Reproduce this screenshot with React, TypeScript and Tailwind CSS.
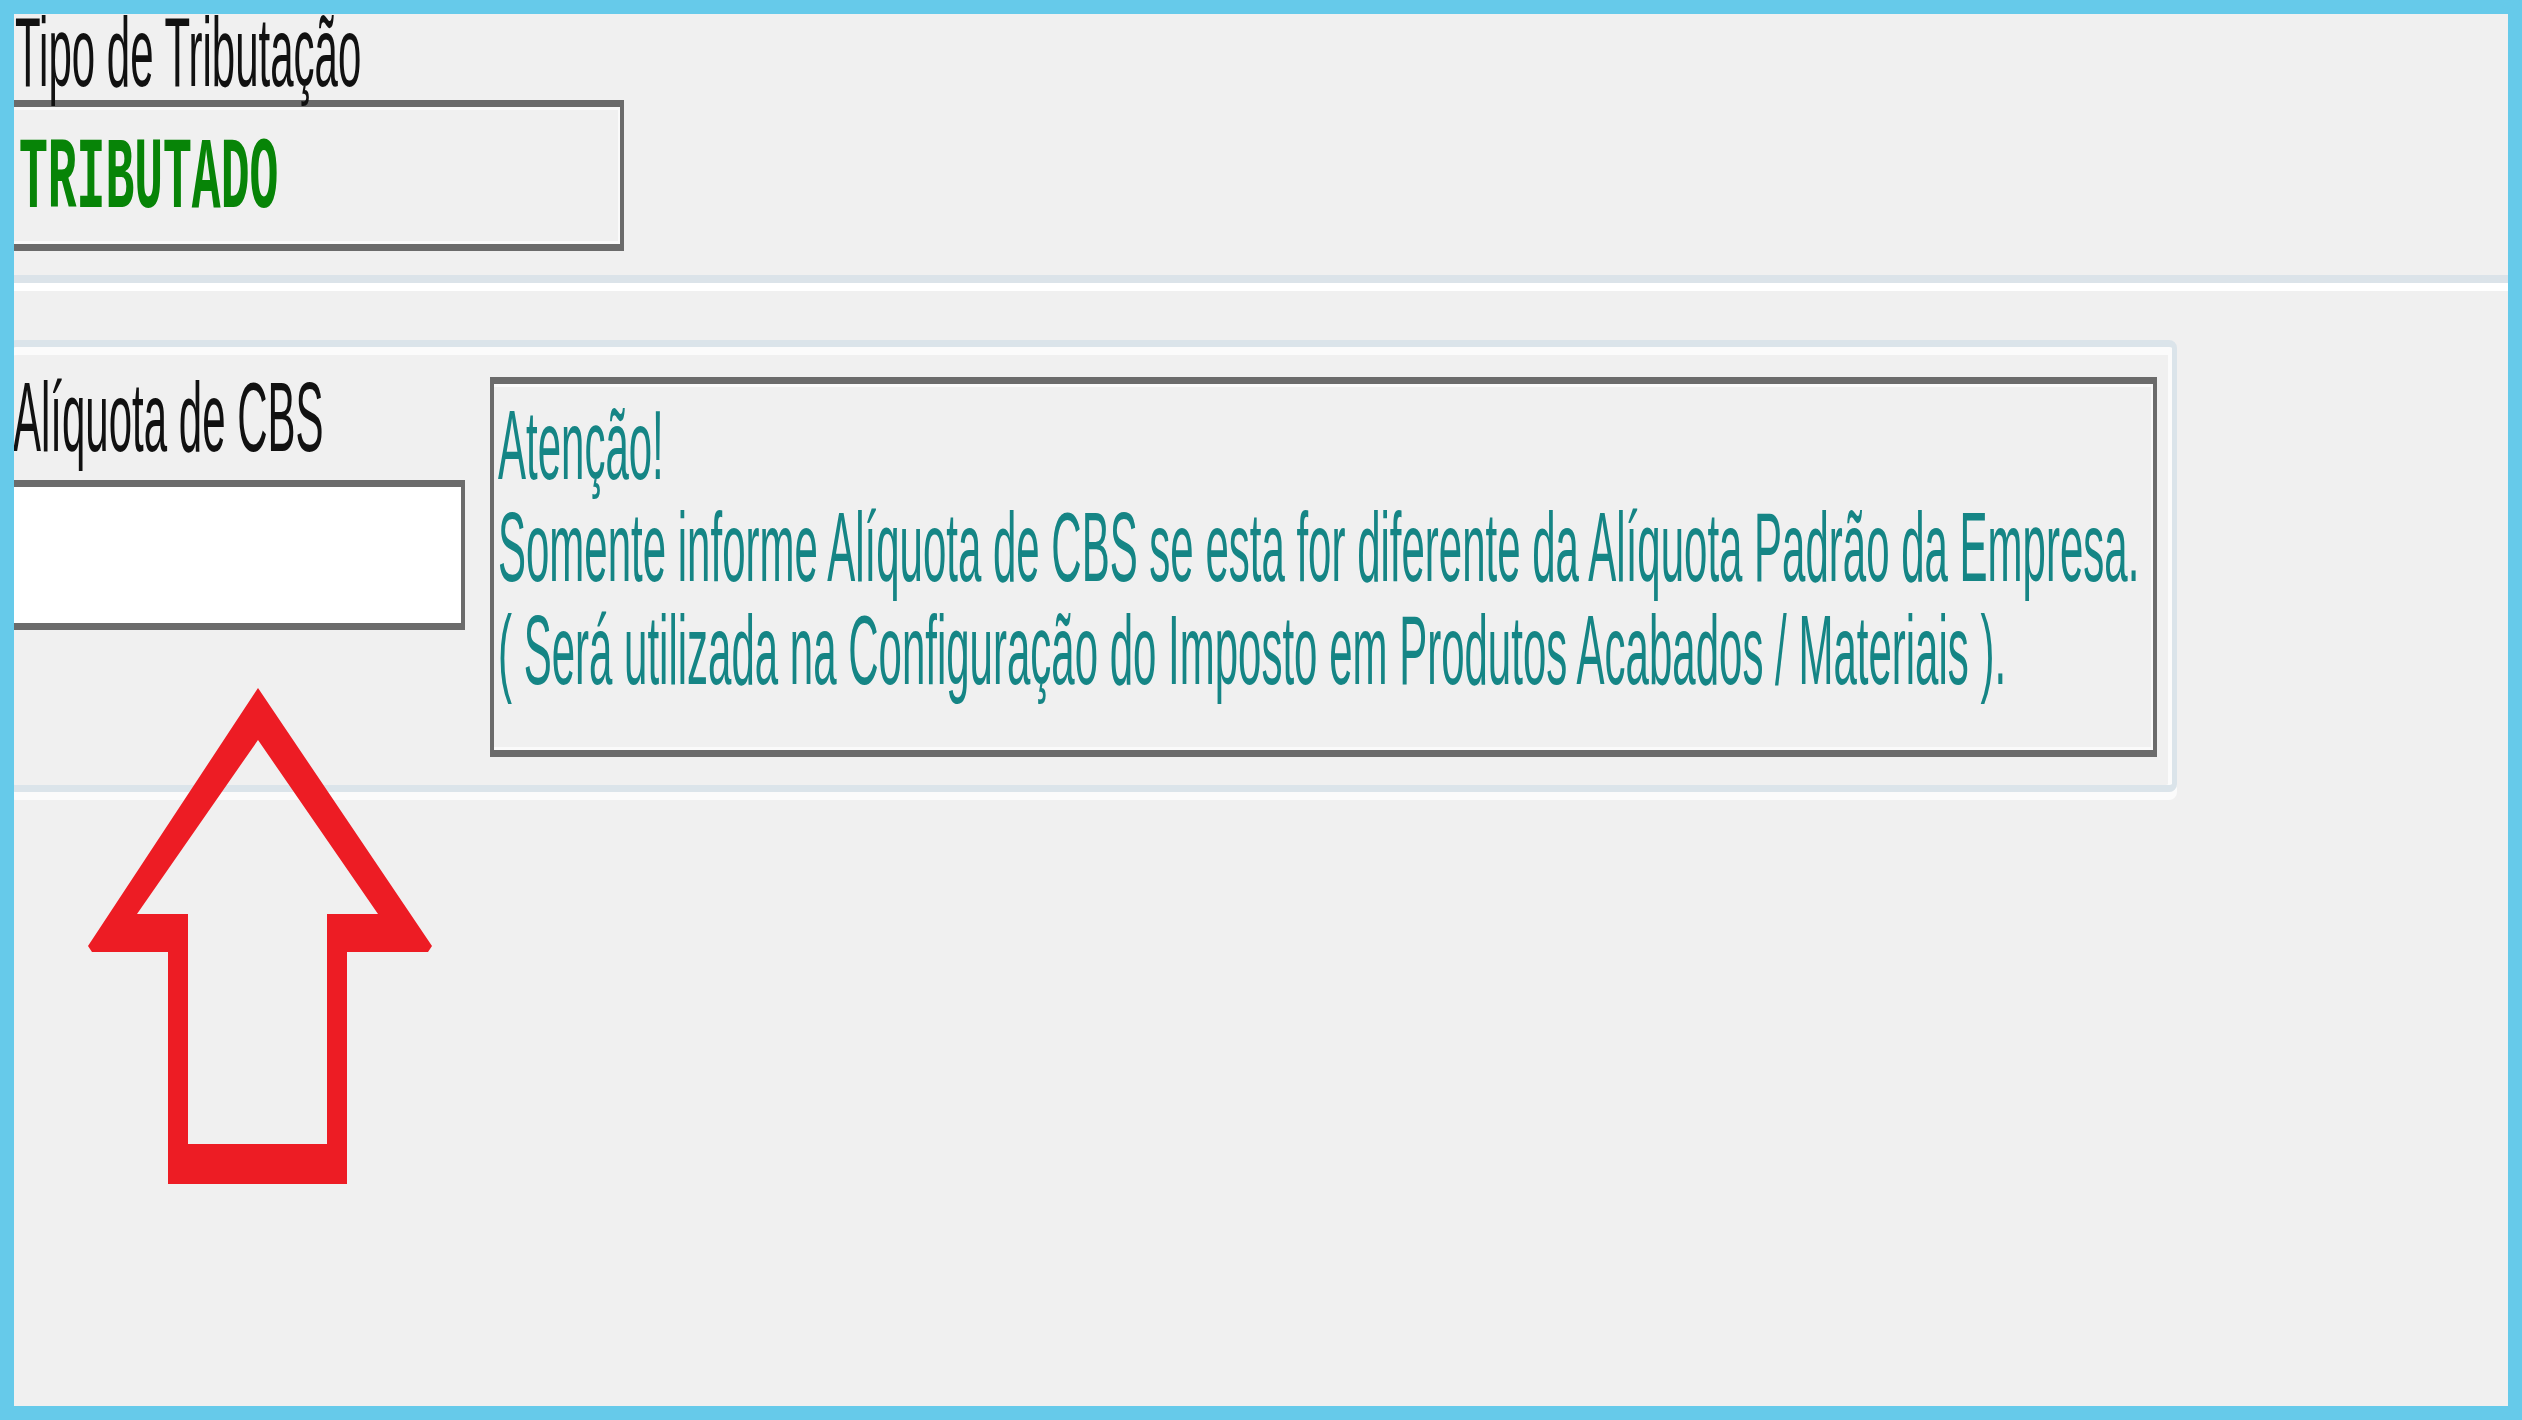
import React from "react";

const sans = "font-['Liberation_Sans',Arial,sans-serif]";

export default function App() {
  return (
    <div className="relative w-[2522px] h-[1420px] border-[14px] border-[#66CAEA] bg-[#F0F0F0] overflow-hidden flex flex-col">
      {/* Tipo de Tributação */}
      <div className="h-[86px] pl-[1px]">
        <div className={`${sans} text-[42px] leading-[34px] text-[#111111] whitespace-nowrap origin-top-left [transform:scaleY(2.33)]`}>
          Tipo de Tributação
        </div>
      </div>
      <div className="-ml-[4px] w-[614px] h-[151px] border-y-[7px] border-x-[4px] border-[#6b6b6b] bg-[#F0F0F0] shadow-[inset_0_3px_0_#fafafa,inset_0_-3px_0_#fafafa,inset_-2px_0_0_#fafafa]">
        <div className="mt-[39px] pl-[5px]">
          <div className="font-['Liberation_Mono',monospace] font-bold text-[48px] leading-[32px] text-[#078407] whitespace-nowrap origin-top-left [transform:scaleY(2.12)]">
            TRIBUTADO
          </div>
        </div>
      </div>

      {/* separator */}
      <div className="mt-[24px] h-[16px] border-t-[8px] border-b-[8px] border-t-[#dbe3e9] border-b-white -ml-[4px] -mr-[4px]" />

      {/* group box */}
      <div className="mt-[49px] -ml-[6px] w-[2169px] h-[452px] rounded-[8px] border-t-[7px] border-b-[7px] border-x-[5px] border-[#dbe4ea] shadow-[inset_0_8px_0_#fbfbfb,inset_-4px_0_0_#fbfbfb,0_8px_0_#fbfbfb] flex flex-row">
        <div className="w-[452px] flex flex-col">
          <div className="pt-[32px] h-[133px]">
            <div className={`${sans} text-[42px] leading-[34px] text-[#111111] whitespace-nowrap origin-top-left [transform:scaleY(2.33)]`}>
              Alíquota de CBS
            </div>
          </div>
          <div className="-ml-[3px] w-[455px] h-[150px] border-y-[7px] border-x-[4px] border-[#6b6b6b] bg-white" />
        </div>
        <div className="ml-[25px] mt-[30px] w-[1667px] h-[380px] border-y-[7px] border-x-[4px] border-[#6b6b6b] bg-[#F0F0F0] shadow-[inset_0_3px_0_#fafafa,inset_0_-3px_0_#fafafa,inset_-2px_0_0_#fafafa]">
          <div className="pt-[11px] pl-[4px]">
            <div className={`${sans} text-[42px] leading-[44px] text-[#158585] whitespace-nowrap origin-top-left [transform:scaleY(2.33)]`}>
              <div>Atenção!</div>
              <div>Somente informe Alíquota de CBS se esta for diferente da Alíquota Padrão da Empresa.</div>
              <div>( Será utilizada na Configuração do Imposto em Produtos Acabados / Materiais ).</div>
            </div>
          </div>
        </div>
      </div>

      {/* red arrow annotation */}
      <svg
        className="absolute left-[71px] top-[671px] w-[350px] h-[505px] pointer-events-none"
        viewBox="85 685 350 505"
      >
        <path
          fillRule="evenodd"
          fill="#ED1C24"
          d="M258,688 L432,946 L428,952 L347,952 L347,1184 L168,1184 L168,952 L92,952 L88,946 Z M258,740 L378,914 L327,914 L327,1144 L188,1144 L188,914 L137,914 Z"
        />
      </svg>
    </div>
  );
}
